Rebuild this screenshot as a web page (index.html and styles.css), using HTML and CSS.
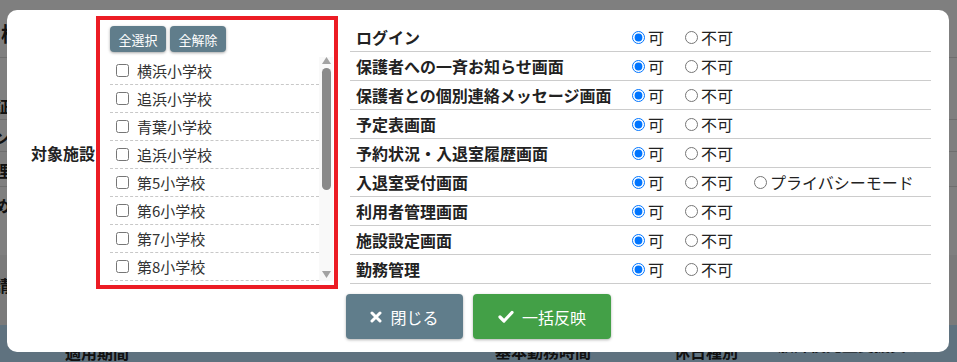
FILE: index.html
```html
<!DOCTYPE html>
<html lang="ja">
<head>
<meta charset="utf-8">
<title>権限設定</title>
<link rel="stylesheet" href="styles.css">
</head>
<body>
<div class="page">
  <div class="page-head">権限設定一覧</div>
  <div class="page-row row-a">証明書</div>
  <div class="page-row row-b">ンター</div>
  <div class="page-row row-c">理事</div>
  <div class="page-row row-d">めん</div>
  <div class="page-row row-e">請求</div>
  <div class="thead">
    <div class="th th1">適用期間</div>
    <div class="th th2">週所定</div>
    <div class="th th3">1日の</div>
    <div class="th th4">基本勤務時間</div>
    <div class="th th5">休日種別</div>
    <div class="th th6">放課後児童支援員の</div>
  </div>
</div>
<div class="overlay"></div>
<div class="modal">
  <div class="modal-main">
    <div class="target">
      <div class="target-label">対象施設</div>
      <div class="picker">
        <div class="picker-actions">
          <div class="mini-btn">全選択</div>
          <div class="mini-btn">全解除</div>
        </div>
        <div class="list-wrap">
          <div class="list">
            <label class="item"><input type="checkbox"><span>横浜小学校</span></label>
            <label class="item"><input type="checkbox"><span>追浜小学校</span></label>
            <label class="item"><input type="checkbox"><span>青葉小学校</span></label>
            <label class="item"><input type="checkbox"><span>追浜小学校</span></label>
            <label class="item"><input type="checkbox"><span>第5小学校</span></label>
            <label class="item"><input type="checkbox"><span>第6小学校</span></label>
            <label class="item"><input type="checkbox"><span>第7小学校</span></label>
            <label class="item"><input type="checkbox"><span>第8小学校</span></label>
            <label class="item"><input type="checkbox"><span>第9小学校</span></label>
          </div>
          <div class="scrollbar">
            <svg class="arrow-up" width="9" height="7" viewBox="0 0 9 7"><polygon points="4.5,0 9,7 0,7" fill="#a3a3a3"/></svg>
            <div class="thumb"></div>
            <div class="sb-space"></div>
            <svg class="arrow-down" width="9" height="7" viewBox="0 0 9 7"><polygon points="0,0 9,0 4.5,7" fill="#a3a3a3"/></svg>
          </div>
        </div>
      </div>
    </div>
    <div class="perms">
      <div class="perm-row"><div class="perm-name">ログイン</div><label class="opt"><input type="radio" name="p1" checked>可</label><label class="opt"><input type="radio" name="p1">不可</label></div>
      <div class="perm-row"><div class="perm-name">保護者への一斉お知らせ画面</div><label class="opt"><input type="radio" name="p2" checked>可</label><label class="opt"><input type="radio" name="p2">不可</label></div>
      <div class="perm-row"><div class="perm-name">保護者との個別連絡メッセージ画面</div><label class="opt"><input type="radio" name="p3" checked>可</label><label class="opt"><input type="radio" name="p3">不可</label></div>
      <div class="perm-row"><div class="perm-name">予定表画面</div><label class="opt"><input type="radio" name="p4" checked>可</label><label class="opt"><input type="radio" name="p4">不可</label></div>
      <div class="perm-row"><div class="perm-name">予約状況・入退室履歴画面</div><label class="opt"><input type="radio" name="p5" checked>可</label><label class="opt"><input type="radio" name="p5">不可</label></div>
      <div class="perm-row"><div class="perm-name">入退室受付画面</div><label class="opt"><input type="radio" name="p6" checked>可</label><label class="opt"><input type="radio" name="p6">不可</label><label class="opt opt-last"><input type="radio" name="p6">プライバシーモード</label></div>
      <div class="perm-row"><div class="perm-name">利用者管理画面</div><label class="opt"><input type="radio" name="p7" checked>可</label><label class="opt"><input type="radio" name="p7">不可</label></div>
      <div class="perm-row"><div class="perm-name">施設設定画面</div><label class="opt"><input type="radio" name="p8" checked>可</label><label class="opt"><input type="radio" name="p8">不可</label></div>
      <div class="perm-row"><div class="perm-name">勤務管理</div><label class="opt"><input type="radio" name="p9" checked>可</label><label class="opt"><input type="radio" name="p9">不可</label></div>
    </div>
  </div>
  <div class="modal-footer">
    <div class="btn btn-close">
      <svg width="12" height="12" viewBox="0 0 12 12"><path d="M2 2 L10 10 M10 2 L2 10" stroke="#fff" stroke-width="3" stroke-linecap="round"/></svg>
      <span>閉じる</span>
    </div>
    <div class="btn btn-apply">
      <svg width="16" height="13" viewBox="0 0 16 13"><path d="M2 7 L6 11 L14 2.5" stroke="#fff" stroke-width="3.2" fill="none" stroke-linecap="round" stroke-linejoin="round"/></svg>
      <span>一括反映</span>
    </div>
  </div>
</div>
</body>
</html>
```
FILE: styles.css
```css
html, body {
  margin: 0;
  padding: 0;
}
body {
  width: 957px;
  height: 362px;
  overflow: hidden;
  position: relative;
  background: #fff;
  font-family: "Noto Sans CJK JP", "Noto Sans", sans-serif;
  color: #222;
}

/* background page */
.page {
  display: flex;
  flex-direction: column;
  width: 957px;
  height: 362px;
}
.page-head {
  height: 60px;
  box-sizing: border-box;
  padding: 22px 0 0 1px;
  font-size: 20px;
  font-weight: 700;
  line-height: 24px;
  white-space: nowrap;
  border-bottom: 1px solid #ddd;
}
.page-row {
  box-sizing: border-box;
  font-size: 16px;
  font-weight: 700;
  white-space: nowrap;
  padding-left: 0;
  text-indent: -6px;
  border-bottom: 1px solid #ddd;
}
.row-a { height: 63px; padding-top: 36px; }
.row-b { height: 34px; padding-top: 5px; }
.row-c { height: 36px; padding-top: 6px; }
.row-d { height: 72px; padding-top: 6px; border-bottom: none; }
.row-e { height: 73px; padding-top: 18px; background: #f4f4f4; border-bottom: none; }
.thead {
  flex: 1;
  display: flex;
  background: #bfe4ff;
  font-size: 16px;
  font-weight: 700;
  line-height: 20px;
  white-space: nowrap;
}
.th1 { width: 266px; padding: 17px 0 0 65px; box-sizing: border-box; }
.th2 { width: 102px; padding-top: 5px; }
.th3 { width: 127px; padding-top: 6px; }
.th4 { width: 179px; padding-top: 16px; }
.th5 { width: 104px; padding-top: 16px; }
.th6 { flex: 1; padding-top: 9px; }

.overlay {
  position: fixed;
  inset: 0;
  background: rgba(0, 0, 0, 0.5);
}

/* modal */
.modal {
  position: absolute;
  left: 7px;
  top: 10px;
  width: 942px;
  height: 342px;
  box-sizing: border-box;
  padding-top: 6px;
  background: #fff;
  border-radius: 10px;
}
.modal-main {
  display: flex;
  align-items: flex-start;
}
.target {
  display: flex;
  align-items: center;
  flex-shrink: 0;
}
.target-label {
  width: 89px;
  box-sizing: border-box;
  padding-left: 24px;
  font-size: 16px;
  font-weight: 700;
  white-space: nowrap;
  color: #222;
}
.picker {
  width: 242px;
  height: 273px;
  box-sizing: border-box;
  border: 4px solid #ec1c24;
  padding: 6px 1px 0 10px;
}
.picker-actions {
  display: flex;
  gap: 4px;
}
.mini-btn {
  width: 56px;
  height: 26px;
  display: flex;
  align-items: center;
  justify-content: center;
  background: #607d8b;
  color: #fff;
  font-size: 13px;
  border-radius: 4px;
  box-shadow: 0 1px 3px rgba(0, 0, 0, 0.35);
}
.list-wrap {
  display: flex;
  margin-top: 5px;
}
.list {
  width: 209px;
  height: 224px;
  overflow: hidden;
}
.item {
  height: 27px;
  display: flex;
  align-items: center;
  gap: 8px;
  padding-left: 6px;
  border-bottom: 1px dashed #c8c8c8;
  font-size: 15px;
  color: #333;
}
.item input {
  margin: 0;
  width: 13px;
  height: 13px;
}
.scrollbar {
  width: 14px;
  height: 224px;
  display: flex;
  flex-direction: column;
  align-items: center;
  background: #f9f9f9;
}
.arrow-up { display: block; }
.thumb {
  width: 9px;
  height: 122px;
  margin-top: 4px;
  border-radius: 5px;
  background: #8a8a8a;
}
.sb-space { flex: 1; }
.arrow-down { display: block; margin-bottom: 3px; }

.perms {
  margin-left: 12px;
  margin-top: 7px;
  width: 581px;
  flex-shrink: 0;
}
.perm-row {
  height: 28px;
  display: flex;
  align-items: center;
  border-bottom: 1px solid #ccc;
}
.perm-name {
  width: 282px;
  flex-shrink: 0;
  box-sizing: border-box;
  padding-left: 6px;
  font-size: 16px;
  font-weight: 700;
  white-space: nowrap;
  color: #222;
}
.opt {
  display: flex;
  align-items: center;
  flex-shrink: 0;
  margin-right: 21px;
  font-size: 16px;
  color: #222;
  white-space: nowrap;
}
.opt-last { margin-right: 0; }
.opt input {
  margin: 0 3px 0 0;
  width: 13px;
  height: 13px;
}

.modal-footer {
  display: flex;
  gap: 10px;
  margin-top: 5px;
  padding-left: 339px;
}
.btn {
  height: 45px;
  display: flex;
  align-items: center;
  justify-content: center;
  gap: 8px;
  color: #fff;
  font-size: 16px;
  border-radius: 4px;
  box-shadow: 0 1px 3px rgba(0, 0, 0, 0.3);
}
.btn svg { display: block; }
.btn-close {
  width: 117px;
  background: #607d8b;
}
.btn-apply {
  width: 138px;
  background: #43a047;
}
```
